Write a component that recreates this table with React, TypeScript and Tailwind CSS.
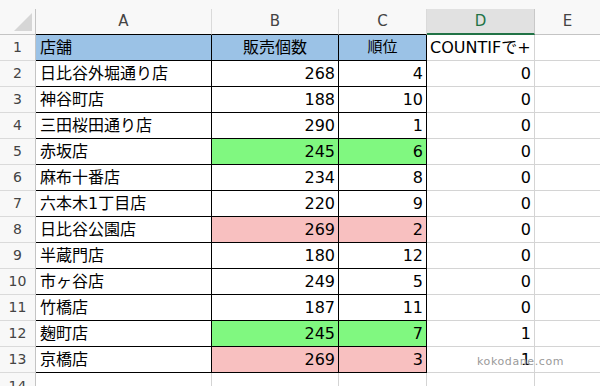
import React from "react";

type Row = { name: string; sales: string; rank: string; cnt: string; fill?: "g" | "p"; head?: boolean };

const rows: Row[] = [
  { name: "店舗", sales: "販売個数", rank: "順位", cnt: "COUNTIFで+", head: true },
  { name: "日比谷外堀通り店", sales: "268", rank: "4", cnt: "0" },
  { name: "神谷町店", sales: "188", rank: "10", cnt: "0" },
  { name: "三田桜田通り店", sales: "290", rank: "1", cnt: "0" },
  { name: "赤坂店", sales: "245", rank: "6", cnt: "0", fill: "g" },
  { name: "麻布十番店", sales: "234", rank: "8", cnt: "0" },
  { name: "六本木1丁目店", sales: "220", rank: "9", cnt: "0" },
  { name: "日比谷公園店", sales: "269", rank: "2", cnt: "0", fill: "p" },
  { name: "半蔵門店", sales: "180", rank: "12", cnt: "0" },
  { name: "市ヶ谷店", sales: "249", rank: "5", cnt: "0" },
  { name: "竹橋店", sales: "187", rank: "11", cnt: "0" },
  { name: "麹町店", sales: "245", rank: "7", cnt: "1", fill: "g" },
  { name: "京橋店", sales: "269", rank: "3", cnt: "1", fill: "p" },
];

const font = { fontFamily: '"DejaVu Sans", "Noto Sans CJK JP", sans-serif' };

export default function App() {
  return (
    <div className="w-[600px] h-[386px] overflow-hidden bg-white relative" style={font}>
      {/* top strip */}
      <div className="h-[9px] bg-[#f8f8f8]" />
      {/* column header row */}
      <div className="flex h-[26px] bg-[#f8f8f8] text-[15px] text-[#444]">
        <div className="w-[36px] shrink-0 border-r border-b border-[#c4c4c4] relative">
          <div className="absolute right-[3px] bottom-[3px] w-0 h-0 border-l-[18px] border-l-transparent border-b-[18px] border-b-[#d6d6d6]" />
        </div>
        <div className="w-[176px] shrink-0 border-r border-r-[#dadada] border-b border-b-black flex items-center justify-center">A</div>
        <div className="w-[127px] shrink-0 border-r border-r-[#dadada] border-b border-b-black flex items-center justify-center">B</div>
        <div className="w-[88px] shrink-0 border-r border-r-[#dadada] border-b border-b-black flex items-center justify-center">C</div>
        <div className="w-[108px] shrink-0 border-r border-r-[#c8c8c8] border-b-2 border-b-[#217346] bg-[#e1e1e1] text-[#217346] flex items-center justify-center">D</div>
        <div className="flex-1 border-b border-[#c4c4c4] flex items-center justify-center">E</div>
      </div>
      {rows.map((r, i) => {
        const fill = r.fill === "g" ? "bg-[#80f880]" : r.fill === "p" ? "bg-[#f8c0c0]" : "bg-white";
        return (
          <div key={i} className="flex h-[26px] text-[16px] text-black">
            <div className="w-[36px] shrink-0 bg-[#f8f8f8] border-r border-r-[#c4c4c4] border-b border-b-[#dadada] flex items-center justify-center text-[14px] text-[#444]">
              {i + 1}
            </div>
            <div className={`w-[176px] shrink-0 border-r border-b border-black flex items-center pl-[4px] whitespace-nowrap ${r.head ? "bg-[#9bc2e6]" : "bg-white"}`}>
              {r.name}
            </div>
            <div className={`w-[127px] shrink-0 border-r border-b border-black flex items-center ${r.head ? "bg-[#9bc2e6] justify-center" : `${fill} justify-end pr-[3px]`}`}>
              {r.sales}
            </div>
            <div className={`w-[88px] shrink-0 border-r border-b border-black flex items-center ${r.head ? "bg-[#9bc2e6] justify-center text-[15px]" : `${fill} justify-end pr-[3px]`}`}>
              {r.rank}
            </div>
            <div className={`w-[108px] shrink-0 border-r border-b border-[#d4d4d4] flex items-center whitespace-nowrap ${r.head ? "justify-start pl-[3px]" : "justify-end pr-[3px]"}`}>
              {r.cnt}
            </div>
            <div className="flex-1 border-b border-[#d4d4d4]" />
          </div>
        );
      })}
      <div className="flex h-[26px]">
        <div className="w-[36px] shrink-0 bg-[#f8f8f8] border-r border-r-[#c4c4c4] flex items-center justify-center text-[14px] text-[#444]">14</div>
        <div className="w-[176px] shrink-0 border-r border-[#d4d4d4]" />
        <div className="w-[127px] shrink-0 border-r border-[#d4d4d4]" />
        <div className="w-[88px] shrink-0 border-r border-[#d4d4d4]" />
        <div className="w-[108px] shrink-0 border-r border-[#d4d4d4]" />
        <div className="flex-1" />
      </div>
      <div
        className="absolute left-[477px] top-[356px] text-[11px] leading-none text-[#9a9a9a] tracking-[0.6px]"
        style={{ fontFamily: '"DejaVu Sans", sans-serif', textShadow: "0 0 1px #fff" }}
      >
        kokodane.com
      </div>
    </div>
  );
}
